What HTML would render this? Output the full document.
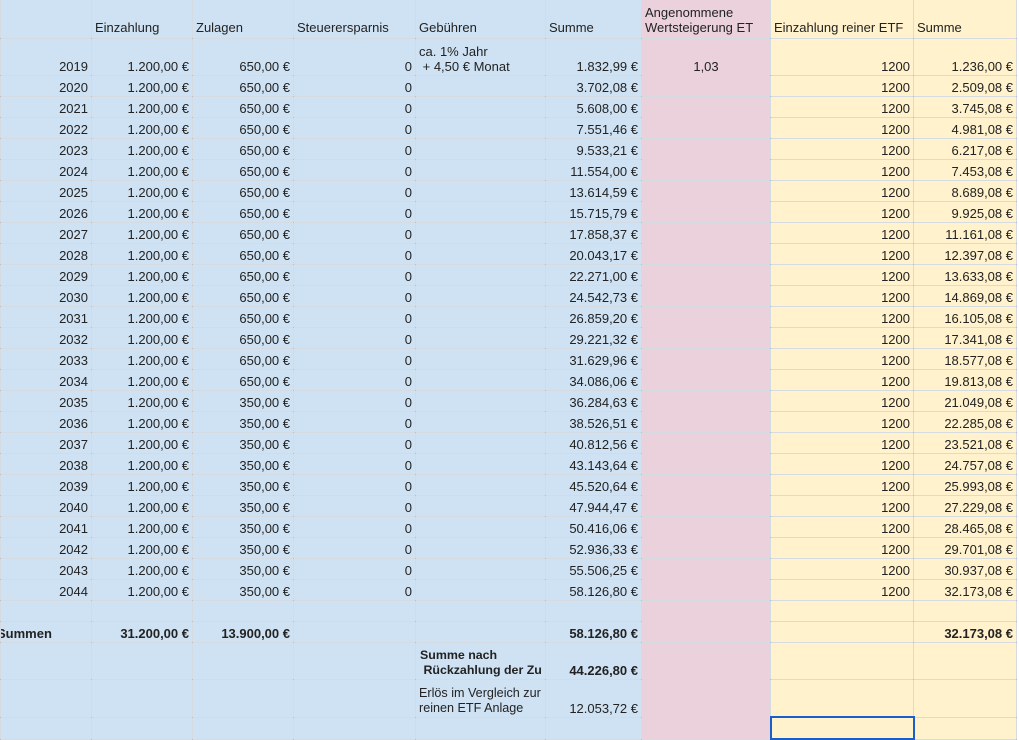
<!DOCTYPE html>
<html><head><meta charset="utf-8"><style>
body{margin:0;width:1019px;height:736px;overflow:hidden;background:#fff;font-family:"Liberation Sans",Arial,sans-serif;font-size:13px;color:#222;}
table{position:absolute;left:0;top:-2px;width:1019px;border-collapse:collapse;table-layout:fixed;}
td{border:1px solid rgba(70,90,120,0.22);padding:0 3px 1px 3px;vertical-align:bottom;text-align:right;white-space:nowrap;overflow:hidden;line-height:15px;}
td:nth-child(-n+6){background:#cfe2f3;}
td:nth-child(7){background:#ead1dc;}
td:nth-child(8),td:nth-child(9){background:#fff2cc;}
td:nth-child(10){background:#fff;border:none;}
tr.h td{text-align:left;height:36px;padding-bottom:3px;}
tr.d td{height:19px;}
.l{text-align:left!important}
.c{text-align:center!important}
.b{font-weight:bold}
tr.t td{height:35px;}
</style></head><body>
<table>
<colgroup><col style="width:91px"><col style="width:101px"><col style="width:101px"><col style="width:122px"><col style="width:130px"><col style="width:96px"><col style="width:129px"><col style="width:143px"><col style="width:103px"><col style="width:3px"></colgroup>
<tr class="h"><td></td><td>Einzahlung</td><td>Zulagen</td><td>Steuerersparnis</td><td>Gebühren</td><td>Summe</td><td style="line-height:15px">Angenommene<br>Wertsteigerung ET</td><td>Einzahlung reiner ETF</td><td>Summe</td><td></td></tr>
<tr><td style="height:35px">2019</td><td>1.200,00 €</td><td>650,00 €</td><td>0</td><td class="l">ca. 1% Jahr<br>&nbsp;+ 4,50 € Monat</td><td>1.832,99 €</td><td class="c">1,03</td><td>1200</td><td>1.236,00 €</td><td></td></tr>
<tr class="d"><td>2020</td><td>1.200,00 €</td><td>650,00 €</td><td>0</td><td></td><td>3.702,08 €</td><td></td><td>1200</td><td>2.509,08 €</td><td></td></tr>
<tr class="d"><td>2021</td><td>1.200,00 €</td><td>650,00 €</td><td>0</td><td></td><td>5.608,00 €</td><td></td><td>1200</td><td>3.745,08 €</td><td></td></tr>
<tr class="d"><td>2022</td><td>1.200,00 €</td><td>650,00 €</td><td>0</td><td></td><td>7.551,46 €</td><td></td><td>1200</td><td>4.981,08 €</td><td></td></tr>
<tr class="d"><td>2023</td><td>1.200,00 €</td><td>650,00 €</td><td>0</td><td></td><td>9.533,21 €</td><td></td><td>1200</td><td>6.217,08 €</td><td></td></tr>
<tr class="d"><td>2024</td><td>1.200,00 €</td><td>650,00 €</td><td>0</td><td></td><td>11.554,00 €</td><td></td><td>1200</td><td>7.453,08 €</td><td></td></tr>
<tr class="d"><td>2025</td><td>1.200,00 €</td><td>650,00 €</td><td>0</td><td></td><td>13.614,59 €</td><td></td><td>1200</td><td>8.689,08 €</td><td></td></tr>
<tr class="d"><td>2026</td><td>1.200,00 €</td><td>650,00 €</td><td>0</td><td></td><td>15.715,79 €</td><td></td><td>1200</td><td>9.925,08 €</td><td></td></tr>
<tr class="d"><td>2027</td><td>1.200,00 €</td><td>650,00 €</td><td>0</td><td></td><td>17.858,37 €</td><td></td><td>1200</td><td>11.161,08 €</td><td></td></tr>
<tr class="d"><td>2028</td><td>1.200,00 €</td><td>650,00 €</td><td>0</td><td></td><td>20.043,17 €</td><td></td><td>1200</td><td>12.397,08 €</td><td></td></tr>
<tr class="d"><td>2029</td><td>1.200,00 €</td><td>650,00 €</td><td>0</td><td></td><td>22.271,00 €</td><td></td><td>1200</td><td>13.633,08 €</td><td></td></tr>
<tr class="d"><td>2030</td><td>1.200,00 €</td><td>650,00 €</td><td>0</td><td></td><td>24.542,73 €</td><td></td><td>1200</td><td>14.869,08 €</td><td></td></tr>
<tr class="d"><td>2031</td><td>1.200,00 €</td><td>650,00 €</td><td>0</td><td></td><td>26.859,20 €</td><td></td><td>1200</td><td>16.105,08 €</td><td></td></tr>
<tr class="d"><td>2032</td><td>1.200,00 €</td><td>650,00 €</td><td>0</td><td></td><td>29.221,32 €</td><td></td><td>1200</td><td>17.341,08 €</td><td></td></tr>
<tr class="d"><td>2033</td><td>1.200,00 €</td><td>650,00 €</td><td>0</td><td></td><td>31.629,96 €</td><td></td><td>1200</td><td>18.577,08 €</td><td></td></tr>
<tr class="d"><td>2034</td><td>1.200,00 €</td><td>650,00 €</td><td>0</td><td></td><td>34.086,06 €</td><td></td><td>1200</td><td>19.813,08 €</td><td></td></tr>
<tr class="d"><td>2035</td><td>1.200,00 €</td><td>350,00 €</td><td>0</td><td></td><td>36.284,63 €</td><td></td><td>1200</td><td>21.049,08 €</td><td></td></tr>
<tr class="d"><td>2036</td><td>1.200,00 €</td><td>350,00 €</td><td>0</td><td></td><td>38.526,51 €</td><td></td><td>1200</td><td>22.285,08 €</td><td></td></tr>
<tr class="d"><td>2037</td><td>1.200,00 €</td><td>350,00 €</td><td>0</td><td></td><td>40.812,56 €</td><td></td><td>1200</td><td>23.521,08 €</td><td></td></tr>
<tr class="d"><td>2038</td><td>1.200,00 €</td><td>350,00 €</td><td>0</td><td></td><td>43.143,64 €</td><td></td><td>1200</td><td>24.757,08 €</td><td></td></tr>
<tr class="d"><td>2039</td><td>1.200,00 €</td><td>350,00 €</td><td>0</td><td></td><td>45.520,64 €</td><td></td><td>1200</td><td>25.993,08 €</td><td></td></tr>
<tr class="d"><td>2040</td><td>1.200,00 €</td><td>350,00 €</td><td>0</td><td></td><td>47.944,47 €</td><td></td><td>1200</td><td>27.229,08 €</td><td></td></tr>
<tr class="d"><td>2041</td><td>1.200,00 €</td><td>350,00 €</td><td>0</td><td></td><td>50.416,06 €</td><td></td><td>1200</td><td>28.465,08 €</td><td></td></tr>
<tr class="d"><td>2042</td><td>1.200,00 €</td><td>350,00 €</td><td>0</td><td></td><td>52.936,33 €</td><td></td><td>1200</td><td>29.701,08 €</td><td></td></tr>
<tr class="d"><td>2043</td><td>1.200,00 €</td><td>350,00 €</td><td>0</td><td></td><td>55.506,25 €</td><td></td><td>1200</td><td>30.937,08 €</td><td></td></tr>
<tr class="d"><td>2044</td><td>1.200,00 €</td><td>350,00 €</td><td>0</td><td></td><td>58.126,80 €</td><td></td><td>1200</td><td>32.173,08 €</td><td></td></tr>
<tr class="d"><td></td><td></td><td></td><td></td><td></td><td></td><td></td><td></td><td></td><td></td></tr>
<tr class="d b"><td class="l" style="text-indent:-7px">Summen</td><td>31.200,00 €</td><td>13.900,00 €</td><td></td><td></td><td>58.126,80 €</td><td></td><td></td><td>32.173,08 €</td><td></td></tr>
<tr class="t"><td></td><td></td><td></td><td></td><td class="l b" style="padding-left:4px;font-size:12.4px">Summe nach<br>&nbsp;Rückzahlung der Zu</td><td class="b">44.226,80 €</td><td></td><td></td><td></td><td></td></tr>
<tr class="t"><td></td><td></td><td></td><td></td><td class="l" style="font-size:12.6px">Erlös im Vergleich zur<br>reinen ETF Anlage</td><td>12.053,72 €</td><td></td><td></td><td></td><td></td></tr>
<tr class="d"><td></td><td></td><td></td><td></td><td></td><td></td><td></td><td style="border:2px solid #1a5fc8"></td><td></td><td></td></tr>
</table>
</body></html>
